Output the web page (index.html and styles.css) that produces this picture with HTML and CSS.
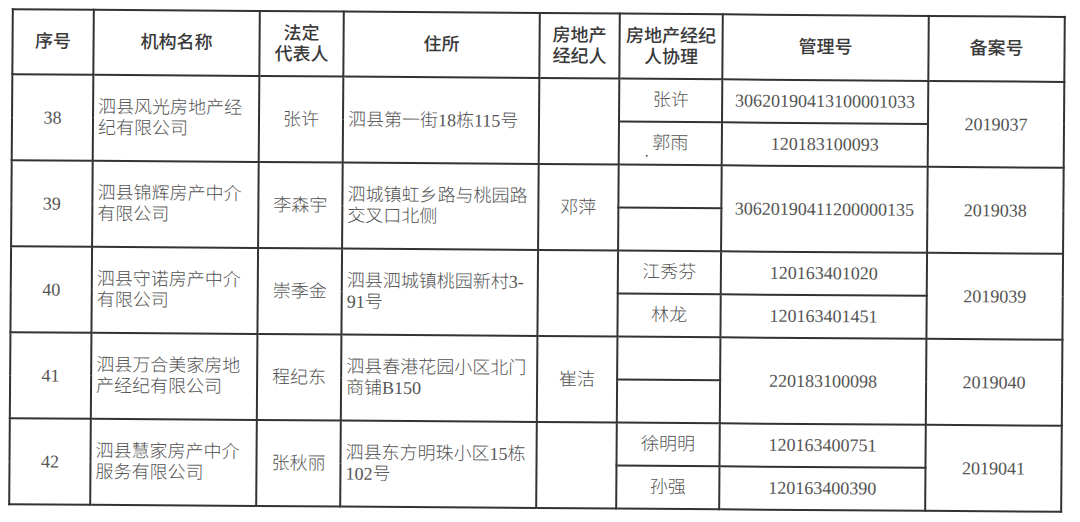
FILE: index.html
```html
<!DOCTYPE html>
<html lang="zh-CN">
<head>
<meta charset="utf-8">
<title>房地产经纪机构备案</title>
<link rel="stylesheet" href="styles.css">
</head>
<body>
<div class="page">
<table class="reg">
<colgroup>
<col class="c-no"><col class="c-name"><col class="c-rep"><col class="c-addr"><col class="c-agent"><col class="c-assist"><col class="c-mgmt"><col class="c-file">
</colgroup>
<thead>
<tr class="head">
<th>序号</th><th>机构名称</th><th>法定<br>代表人</th><th>住所</th><th>房地产<br>经纪人</th><th>房地产经纪<br>人协理</th><th>管理号</th><th>备案号</th>
</tr>
</thead>
<tbody>
<tr class="sub"><td rowspan="2">38</td><td rowspan="2" class="left">泗县风光房地产经<br>纪有限公司</td><td rowspan="2">张许</td><td rowspan="2" class="left">泗县第一街18栋115号</td><td rowspan="2"></td><td>张许</td><td>30620190413100001033</td><td rowspan="2">2019037</td></tr>
<tr class="sub"><td class="speckcell"><span class="speck"></span>郭雨</td><td>120183100093</td></tr>

<tr class="sub"><td rowspan="2">39</td><td rowspan="2" class="left">泗县锦辉房产中介<br>有限公司</td><td rowspan="2">李森宇</td><td rowspan="2" class="left">泗城镇虹乡路与桃园路<br>交叉口北侧</td><td rowspan="2">邓萍</td><td></td><td rowspan="2">30620190411200000135</td><td rowspan="2">2019038</td></tr>
<tr class="sub"><td></td></tr>

<tr class="sub"><td rowspan="2">40</td><td rowspan="2" class="left">泗县守诺房产中介<br>有限公司</td><td rowspan="2">崇季金</td><td rowspan="2" class="left">泗县泗城镇桃园新村3-<br>91号</td><td rowspan="2"></td><td>江秀芬</td><td>120163401020</td><td rowspan="2">2019039</td></tr>
<tr class="sub"><td>林龙</td><td>120163401451</td></tr>

<tr class="sub"><td rowspan="2">41</td><td rowspan="2" class="left">泗县万合美家房地<br>产经纪有限公司</td><td rowspan="2">程纪东</td><td rowspan="2" class="left">泗县春港花园小区北门<br>商铺B150</td><td rowspan="2">崔洁</td><td></td><td rowspan="2">220183100098</td><td rowspan="2">2019040</td></tr>
<tr class="sub"><td></td></tr>

<tr class="sub"><td rowspan="2">42</td><td rowspan="2" class="left">泗县慧家房产中介<br>服务有限公司</td><td rowspan="2">张秋丽</td><td rowspan="2" class="left">泗县东方明珠小区15栋<br>102号</td><td rowspan="2"></td><td>徐明明</td><td>120163400751</td><td rowspan="2">2019041</td></tr>
<tr class="sub"><td>孙强</td><td>120163400390</td></tr>
</tbody>
</table>
</div>
</body>
</html>
```

FILE: styles.css
```css
html, body {
  margin: 0;
  background: #ffffff;
}

body {
  width: 1080px;
  height: 522px;
  overflow: hidden;
  font-family: "Liberation Serif", "Noto Sans CJK SC", serif;
  color: #555555;
}

.page {
  padding: 12px 0 0 10px;
}

.reg {
  border-collapse: collapse;
  table-layout: fixed;
  width: 1052px;
  transform: rotate(0.42deg);
  transform-origin: 526px 247px;
  border: 2px solid #2e2e2e;
  font-size: 18px;
  line-height: 21px;
}

.c-no { width: 81px; }
.c-name { width: 166px; }
.c-rep { width: 84px; }
.c-addr { width: 196px; }
.c-agent { width: 80px; }
.c-assist { width: 103px; }
.c-mgmt { width: 206px; }
.c-file { width: 136px; }

.reg th,
.reg td {
  border: 2px solid #333333;
  padding: 0;
  text-align: center;
  vertical-align: middle;
  white-space: nowrap;
  font-weight: 300;
}

.reg th {
  color: #3a3a3a;
  font-weight: 500;
}

.head {
  height: 65px;
}

.sub {
  height: 43px;
}

.reg td.left {
  text-align: left;
  padding-left: 4px;
}

.speckcell {
  position: relative;
}

.speck {
  position: absolute;
  left: 26px;
  top: 32px;
  width: 2px;
  height: 2px;
  border-radius: 1px;
  background: #555555;
}
```
